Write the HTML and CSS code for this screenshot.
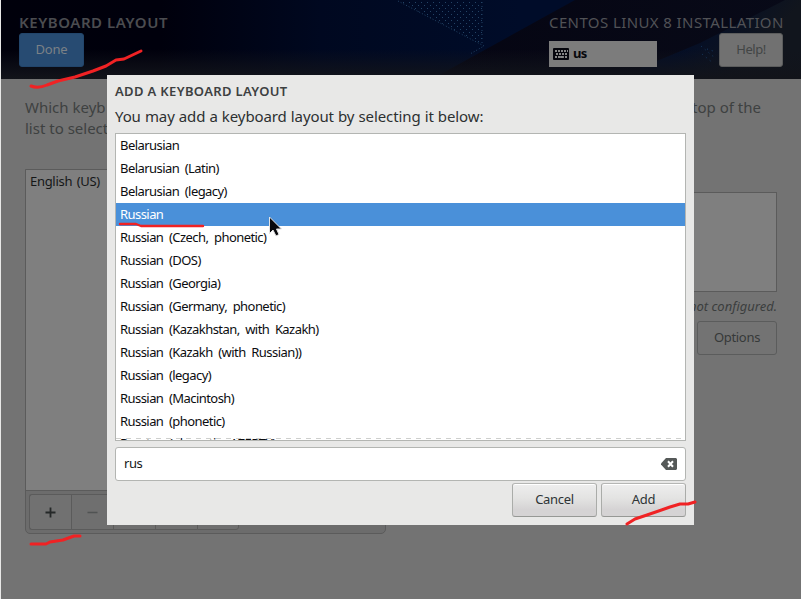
FILE: index.html
```html
<!DOCTYPE html>
<html lang="en">
<head>
<meta charset="utf-8">
<title>Keyboard Layout</title>
<link rel="stylesheet" href="styles.css">
</head>
<body>
<div class="screen">
  <header class="header">
    <svg class="backdrop" width="800" height="79" viewBox="1 0 800 79">
      <defs>
        <linearGradient id="night" x1="0" x2="1"><stop offset="0" stop-color="#00000b"/><stop offset=".2" stop-color="#00000c"/><stop offset=".4" stop-color="#000820"/><stop offset=".65" stop-color="#000c29"/></linearGradient>
        <linearGradient id="fade" x1="0" x2="0" y1="0" y2="1"><stop offset=".62" stop-color="#12141c" stop-opacity="0"/><stop offset="1" stop-color="#12141a"/></linearGradient>
        <linearGradient id="ray" gradientUnits="userSpaceOnUse" x1="690" y1="40" x2="735" y2="79"><stop offset="0" stop-color="#040e26"/><stop offset="1" stop-color="#11151d"/></linearGradient>
        <linearGradient id="dusk" x1="0" x2="1"><stop offset="0" stop-color="#050512"/><stop offset="1" stop-color="#080a18"/></linearGradient>
        <pattern id="dots" width="6" height="6" patternUnits="userSpaceOnUse"><path d="M1 2h1v1H1zM4 5h1v1H4z" fill="#234365"/></pattern>
      </defs>
      <path fill="url(#night)" d="M0 0h801v79H0z"/>
      <path fill="url(#dusk)" d="M575 0H801V79H432z"/>
      <path fill="url(#ray)" d="M785 0H801V79H640V68L700 43z"/>
      <path fill="url(#fade)" d="M0 0h801v79H0z"/>
      <path fill="url(#dots)" d="M398 1H482V44z"/>
      <path d="M398 1L484 46L470 54" fill="none" stroke="#234365" stroke-dasharray="1 2"/>
      <path d="M482 2V44" stroke="#234365" stroke-dasharray="1 3"/>
      <path d="M701 46l14 12M702 54l11 9M707 49l9 3" stroke="#183b61" stroke-dasharray="1 4"/>
    </svg>
    <div class="head-left">
      <div class="title"><span class="t-page">KEYBOARD LAYOUT</span></div>
      <div class="button done"><span>Done</span></div>
    </div>
    <div class="head-right">
      <div class="title"><span class="t-product">CENTOS LINUX 8 INSTALLATION</span></div>
      <div class="head-row">
        <div class="layout-indicator">
          <svg width="16" height="12" viewBox="0 0 16 12"><rect width="16" height="12" rx="1" fill="#05050c"/><path d="M2 3h13M3 6h12M2 9h2m1 0h6m1 0h3" stroke="#858585" stroke-width="1.8" stroke-dasharray="2 1"/><path d="M5 9h6" stroke="#858585" stroke-width="1.8"/></svg>
          <b>us</b>
        </div>
        <div class="button help"><span>Help!</span></div>
      </div>
    </div>
  </header>
  <main class="main">
    <div class="intro"><div><span>Which keyb</span><span class="intro-end">top of the</span></div><div><span>list to select</span></div></div>
    <div class="columns">
      <section class="layouts">
        <div class="layout-list"><span>English (US)</span></div>
        <div class="toolbar">
          <div class="tool"><svg width="11" height="11" viewBox="0 0 11 11"><path d="M.5 5.5h10M5.5.5v10" stroke="#252828" stroke-width="1.8"/></svg></div>
          <div class="tool off"><svg width="11" height="11" viewBox="0 0 11 11"><path d="M.5 5.5h10" stroke="#505353" stroke-width="1.5"/></svg></div>
          <div class="tool off"></div><div class="tool off"></div><div class="tool off"></div>
        </div>
      </section>
      <section class="switching">
        <div class="test-area"></div>
        <div class="status"><span>not configured.</span></div>
        <div class="button options"><span>Options</span></div>
      </section>
    </div>
  </main>
</div>
<div class="dialog">
  <h1><span>ADD A KEYBOARD LAYOUT</span></h1>
  <p><span>You may add a keyboard layout by selecting it below:</span></p>
  <div class="choices">
    <div class="choice"><span>Belarusian</span></div>
    <div class="choice"><span>Belarusian (Latin)</span></div>
    <div class="choice"><span>Belarusian (legacy)</span></div>
    <div class="choice selected"><span>Russian</span></div>
    <div class="choice"><span>Russian (Czech, phonetic)</span></div>
    <div class="choice"><span>Russian (DOS)</span></div>
    <div class="choice"><span>Russian (Georgia)</span></div>
    <div class="choice"><span>Russian (Germany, phonetic)</span></div>
    <div class="choice"><span>Russian (Kazakhstan, with Kazakh)</span></div>
    <div class="choice"><span>Russian (Kazakh (with Russian))</span></div>
    <div class="choice"><span>Russian (legacy)</span></div>
    <div class="choice"><span>Russian (Macintosh)</span></div>
    <div class="choice"><span>Russian (phonetic)</span></div>
    <div class="choice partial"><span>Russian (phonetic, AZERTY)</span></div>
  </div>
  <div class="search"><span>rus</span>
    <svg width="16" height="12" viewBox="0 0 16 12"><path d="M5 0H15L16 1V11L15 12H5L0 6.5V5.5z" fill="#555958"/><path d="M7 3.3l5 5.4M12 3.3L7 8.7" stroke="#fff" stroke-width="2"/></svg>
  </div>
  <div class="actions"><div class="button action"><span>Cancel</span></div><div class="button action"><span>Add</span></div></div>
</div>
<svg class="marks" width="801" height="599" viewBox="0 0 801 599">
  <g fill="none" stroke="#f02224" stroke-width="3" stroke-linecap="round" stroke-linejoin="round">
    <path d="M31 86Q38 89 47 85L58 81L75 77L93 71L106 66L116 60L124 59L141 51"/>
    <path d="M120 224L136 224L141 226L203 226" stroke-width="2.4"/>
    <path d="M31 544H46L50 542L63 540L74 536L80 536"/>
    <path d="M627 524L635 519L647 515L670 507L680 504H688L695 502"/>
  </g>
  <path d="M269.500 217V233.500L273 230L276 236L279 234.500L276.500 229H281.500z" fill="#08080c" stroke="#e4e4e4"/>
</svg>
</body>
</html>
```
FILE: styles.css
```css
* { box-sizing: border-box; }
body { margin: 0; width: 801px; height: 599px; overflow: hidden; background: #e8e8e7; font: 13px/18px "Noto Sans", sans-serif; color: #2d3031; }
span, b { white-space: nowrap; }
.screen { margin-left: 1px; height: 599px; background: #737373; }
.header { position: relative; display: flex; justify-content: space-between; height: 79px; padding: 12px 18px 0; }
.backdrop { position: absolute; left: 0; top: 0; }
.head-left, .head-right { position: relative; }
.head-right { width: 234px; }
.title { height: 21px; font-size: 15px; line-height: 21px; color: #4b4c50; }
.t-page { font-weight: 600; letter-spacing: .55px; }
.t-product { color: #515256; letter-spacing: .4px; }
.button { display: flex; align-items: center; justify-content: center; height: 34px; padding-bottom: 2px; border: 1px solid #5b5c5c; border-radius: 3px; letter-spacing: -.3px; }
.done { width: 65px; border-color: #22456b; background: #274b72; color: #7b8186; letter-spacing: -.2px; }
.head-row { display: flex; justify-content: space-between; align-items: flex-end; }
.layout-indicator { display: flex; align-items: center; gap: 4px; width: 108px; height: 26px; padding-left: 4px; background: #7c7c7c; color: #08080d; letter-spacing: -.6px; }
.layout-indicator b { padding-bottom: 2px; }
.help { width: 64px; background: #717171; color: #424545; letter-spacing: -.5px; }
.main { padding: 18px 24px 0; }
.intro { height: 72px; font-size: 15px; line-height: 21px; color: #3e4141; }
.intro > div { display: flex; justify-content: space-between; }
.intro-end { margin-right: 16px; }
.columns { display: flex; justify-content: space-between; }
.layouts { width: 361px; height: 365px; border: 1px solid #5b5b5b; border-radius: 0 0 5px 5px; background: #6c6c6c; }
.layout-list { height: 320px; padding: 2px 4px; background: #7f7f7f; color: #151718; letter-spacing: -.3px; word-spacing: 1.5px; }
.toolbar { display: flex; height: 43px; padding: 3px; border-top: 1px solid #5b5b5b; }
.tool { display: flex; align-items: center; justify-content: center; width: 42px; height: 36px; border: 1px solid #5b5b5b; border-right: 0; background: #717171; }
.tool:first-child { border-radius: 3px 0 0 3px; }
.tool:last-child { border-right: 1px solid #5b5b5b; border-radius: 0 3px 3px 0; }
.off { background: #6f6f6f; }
.switching { display: flex; flex-direction: column; align-items: flex-end; width: 361px; padding-top: 23px; }
.test-area { width: 100%; height: 100px; border: 1px solid #5b5b5b; background: #7f7f7f; }
.status { height: 29px; padding-top: 5px; font-style: italic; color: #3b3e3e; }
.options { width: 80px; color: #363939; }
.dialog { position: absolute; left: 107px; top: 75px; width: 587px; height: 450px; padding: 7px 8px; background: #e8e8e7; }
h1 { height: 20px; margin: 0; font-size: 13px; line-height: 18px; font-weight: 600; letter-spacing: .35px; color: #3d4041; }
p { height: 31px; margin: 0; font-size: 15px; line-height: 28px; letter-spacing: -.1px; word-spacing: .3px; }
.choices { position: relative; height: 308px; overflow: hidden; border: 1px solid #b3b5b2; background: #fff; color: #0c0d10; }
.choices::after { content: ""; position: absolute; left: 0; right: 4px; bottom: 1px; height: 1px; background: repeating-linear-gradient(90deg, #cecfcd 0 5px, transparent 5px 10px); }
.choice { height: 23px; padding-left: 4px; line-height: 22px; letter-spacing: -.56px; word-spacing: 2.8px; }
.selected { background: #4a90d9; color: #fff; }
.partial { margin-top: -1px; }
.search { display: flex; align-items: center; justify-content: space-between; height: 34px; margin-top: 6px; padding: 0 8px; border: 1px solid #b3b5b2; border-radius: 3px; background: #fff; color: #151718; letter-spacing: -.4px; }
.search span { padding-bottom: 2px; }
.actions { display: flex; justify-content: flex-end; gap: 4px; margin-top: 2px; }
.action { width: 85px; border-color: #b5b6b4 #aaaca9 #969895; background: linear-gradient(#eee, #e3e3e2 45%, #d5d3d4 80%); box-shadow: inset 0 1px #fff; color: #2e3436; }
.marks { position: absolute; left: 0; top: 0; }
```
